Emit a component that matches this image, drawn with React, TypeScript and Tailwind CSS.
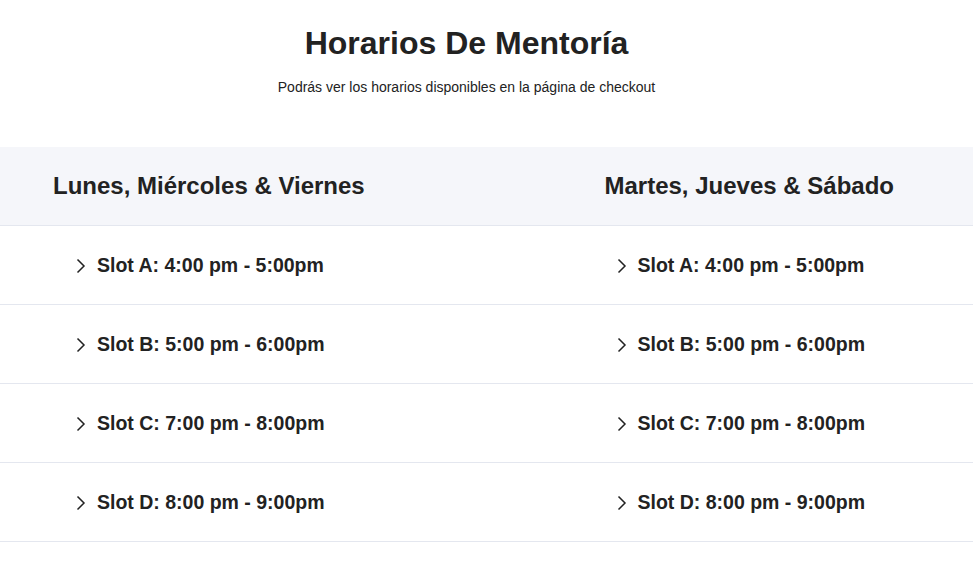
const left = [
  "Slot A: 4:00 pm - 5:00pm",
  "Slot B: 5:00 pm - 6:00pm",
  "Slot C: 7:00 pm - 8:00pm",
  "Slot D: 8:00 pm - 9:00pm",
];
const right = [
  "Slot A: 4:00 pm - 5:00pm",
  "Slot B: 5:00 pm - 6:00pm",
  "Slot C: 7:00 pm - 8:00pm",
  "Slot D: 8:00 pm - 9:00pm",
];

const Slot: React.FC<{ text: string }> = ({ text }) => (
  <div className="flex items-center gap-[11px]">
    <svg width="10" height="16" viewBox="0 0 10 16" fill="none" className="text-[#222]">
      <polyline points="1.5,1.5 8,8 1.5,14.5" stroke="currentColor" strokeWidth="1.5" />
    </svg>
    <span className="text-[19.5px] font-bold text-[#222]">{text}</span>
  </div>
);

export default function App() {
  return (
    <div className="min-h-screen bg-white font-['Liberation_Sans',Arial,sans-serif] text-[#222]">
      <section className="flex flex-col items-center pt-[24px] pr-[40px]">
        <h1 className="text-[32px] font-bold leading-[38px]">Horarios De Mentoría</h1>
        <p className="text-[14px] mt-[15px] leading-[20px]">
          Podrás ver los horarios disponibles en la página de checkout
        </p>
      </section>
      <div className="mt-[50px]">
        <div className="grid grid-cols-2 h-[79px] items-center bg-[#f5f6fa] border-b border-[#e4e7ef]">
          <h2 className="pl-[53px] text-[24px] font-bold">Lunes, Miércoles &amp; Viernes</h2>
          <h2 className="pl-[118px] text-[24px] font-bold">Martes, Jueves &amp; Sábado</h2>
        </div>
        {left.map((s, i) => (
          <div
            key={s}
            className="grid grid-cols-2 h-[79px] pt-[2px] items-center border-b border-[#e4e7ef]"
          >
            <div className="pl-[76px]">
              <Slot text={s} />
            </div>
            <div className="pl-[130px]">
              <Slot text={right[i]} />
            </div>
          </div>
        ))}
      </div>
    </div>
  );
}
